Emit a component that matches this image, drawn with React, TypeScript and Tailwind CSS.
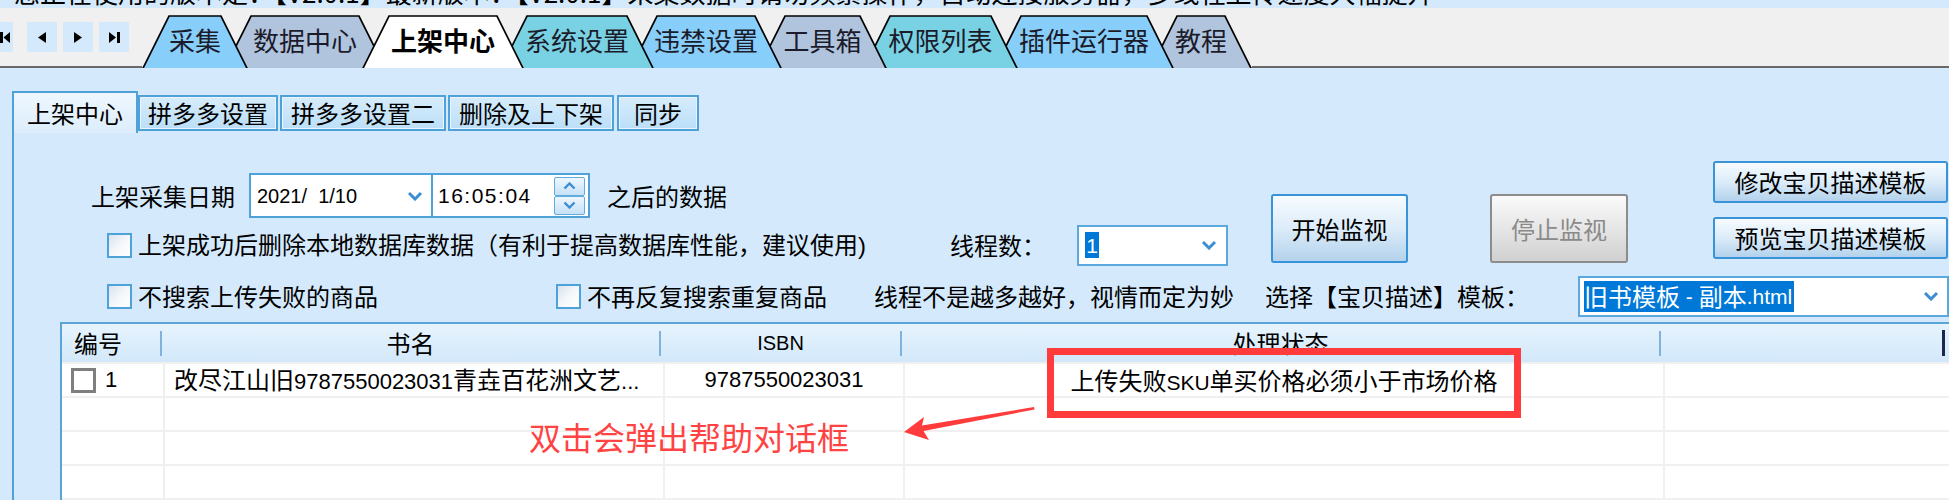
import React from "react";

const CJK = "font-['Noto_Sans_CJK_SC',sans-serif]";
const LAT = "font-['Liberation_Sans','Noto_Sans_CJK_SC',sans-serif]";

type MainTab = { label: string; w: string; n: number; fill: string; z: string; active?: boolean };

const mainTabs: MainTab[] = [
  { label: "采集", w: "w-[106px]", n: 106, fill: "#87cefa", z: "z-[9]" },
  { label: "数据中心", w: "w-[162px]", n: 162, fill: "#b0c4de", z: "z-[8]" },
  { label: "上架中心", w: "w-[162px]", n: 162, fill: "#ffffff", z: "z-[20]", active: true },
  { label: "系统设置", w: "w-[154px]", n: 154, fill: "#79d2e3", z: "z-[6]" },
  { label: "违禁设置", w: "w-[152px]", n: 152, fill: "#87cefa", z: "z-[5]" },
  { label: "工具箱", w: "w-[129px]", n: 129, fill: "#b0c4de", z: "z-[4]" },
  { label: "权限列表", w: "w-[155px]", n: 155, fill: "#79d2e3", z: "z-[3]" },
  { label: "插件运行器", w: "w-[180px]", n: 180, fill: "#87cefa", z: "z-[2]" },
  { label: "教程", w: "w-[102px]", n: 102, fill: "#b0c4de", z: "z-[1]" },
];

function Chev({ up = false, down = false, color = "#3b8ed3" }: { up?: boolean; down?: boolean; color?: string }) {
  if (up) {
    return (
      <svg width="13" height="8" viewBox="0 0 13 8">
        <polyline points="1.5,6.5 6.5,1.5 11.5,6.5" fill="none" stroke={color} strokeWidth="2.4" />
      </svg>
    );
  }
  if (down) {
    return (
      <svg width="13" height="8" viewBox="0 0 13 8">
        <polyline points="1.5,1.5 6.5,6.5 11.5,1.5" fill="none" stroke={color} strokeWidth="2.4" />
      </svg>
    );
  }
  return (
    <svg width="16" height="10" viewBox="0 0 16 10">
      <polyline points="2,2 8,8 14,2" fill="none" stroke={color} strokeWidth="3" />
    </svg>
  );
}

function Check() {
  return <div className="h-[25px] w-[25px] shrink-0 border-2 border-[#4ea1d9] bg-linear-to-br from-[#d9e3ee] via-[#f4f7fa] to-white" />;
}

function InTab({ label, cls }: { label: string; cls: string }) {
  return (
    <div
      className={
        "mb-[2px] flex h-[36px] items-center justify-center border-2 border-[#4ea1d9] text-[24px] leading-none " + cls
      }
    >
      <div className="flex h-full w-full items-center justify-center border border-[#e9f5fe] bg-linear-to-b from-[#d6ecfc] to-[#bcdff8]">
        {label}
      </div>
    </div>
  );
}

export default function App() {
  return (
    <div className={"relative h-[500px] w-[1949px] overflow-hidden bg-[#d4eafc] text-black " + CJK}>
      {/* clipped status line */}
      <div className="h-[8px] overflow-hidden pl-[14px]">
        <div className="mt-[-21px] whitespace-nowrap text-[26px] leading-[26px]">
          您正在使用的版本是：【V2.0.1】最新版本：【V2.0.1】采集数据时请勿频繁操作，自动连接服务器，多线程上传速度大幅提升
        </div>
      </div>

      {/* main tab bar */}
      <div className="flex h-[60px] items-end bg-[#f0f0f0]">
        <div className="flex h-full w-[142px] shrink-0 items-start border-b-2 border-[#696969] pt-[14px]">
          <div className="ml-[-17px] flex h-[30px] w-[30px] items-center bg-[#d4eafc] pl-[17px]">
            <svg width="10" height="11" viewBox="0 0 10 11">
              <rect x="0" y="0" width="3" height="11" fill="#000" />
              <polygon points="10,0 10,11 3.5,5.5" fill="#000" />
            </svg>
          </div>
          <div className="ml-[14px] flex h-[30px] w-[30px] items-center justify-center bg-[#d4eafc]">
            <svg width="8" height="11" viewBox="0 0 8 11">
              <polygon points="8,0 8,11 0,5.5" fill="#000" />
            </svg>
          </div>
          <div className="ml-[6px] flex h-[30px] w-[30px] items-center justify-center bg-[#d4eafc]">
            <svg width="8" height="11" viewBox="0 0 8 11">
              <polygon points="0,0 0,11 8,5.5" fill="#000" />
            </svg>
          </div>
          <div className="ml-[6px] flex h-[30px] w-[30px] items-center justify-center bg-[#d4eafc]">
            <svg width="11" height="11" viewBox="0 0 11 11">
              <polygon points="0,0 0,11 7,5.5" fill="#000" />
              <rect x="8" y="0" width="3" height="11" fill="#000" />
            </svg>
          </div>
        </div>
        <div className="flex h-[53px] shrink-0">
          {mainTabs.map((t, i) => (
            <div
              key={t.label}
              className={
                "relative flex h-[53px] shrink-0 items-center justify-center pb-[3px] " +
                t.w +
                " " +
                t.z +
                (i === 0 ? "" : " ml-[-24px]")
              }
            >
              <svg className="absolute left-0 top-0" width={t.n} height={53} viewBox={`0 0 ${t.n} 53`}>
                <polygon points={`0,54 27,1 ${t.n - 27},1 ${t.n},54`} fill={t.fill} />
                <polyline
                  points={`0.6,54 27,1 ${t.n - 27},1 ${t.n - 0.6},54`}
                  fill="none"
                  stroke="#000"
                  strokeWidth="1.7"
                />
              </svg>
              <span className={"relative text-[26px] leading-[26px] " + (t.active ? "font-bold" : "text-[#1b1b2b]")}>
                {t.label}
              </span>
            </div>
          ))}
        </div>
        <div className="h-full flex-1 border-b-2 border-[#696969]" />
      </div>

      {/* page control */}
      <div className="pl-[12px] pt-[23px]">
        <div className="flex h-[42px] items-end">
          <div className="flex h-[42px] w-[126px] items-center justify-center border-2 border-b-0 border-[#4ea1d9] bg-linear-to-b from-[#eef7fe] to-[#dcedfb] text-[24px] leading-none">
            上架中心
          </div>
          <InTab label="拼多多设置" cls="w-[140px]" />
          <InTab label="拼多多设置二" cls="ml-[2px] w-[166px]" />
          <InTab label="删除及上下架" cls="ml-[2px] w-[166px]" />
          <InTab label="同步" cls="ml-[3px] w-[82px]" />
        </div>

        <div className="h-[367px] border-l-2 border-[#4ea1d9]">
          {/* section 1 */}
          <div className="flex h-[137px] items-start">
            <div className="w-[1214px] shrink-0">
              {/* row A */}
              <div className="mt-[40px] flex h-[45px] items-center pl-[77px]">
                <span className="text-[24px] leading-none">上架采集日期</span>
                <div className="ml-[14px] flex h-[45px] w-[341px] border-2 border-[#4ea1d9] bg-white">
                  <div className="flex w-[182px] items-center border-r-2 border-[#4ea1d9] pl-[6px] pr-[8px]">
                    <span className={"whitespace-pre text-[20px] leading-none " + LAT}>2021/  1/10</span>
                    <span className="ml-auto flex">
                      <Chev />
                    </span>
                  </div>
                  <div className="flex flex-1 items-center pl-[5px] pr-[3px]">
                    <span className={"text-[21px] leading-none tracking-[1.5px] " + LAT}>16:05:04</span>
                    <div className="ml-auto flex h-[38px] w-[31px] flex-col">
                      <div className="flex h-[19px] items-center justify-center rounded-[2px] border border-[#62abdf] bg-linear-to-b from-[#eef7fe] to-[#c6e1f7]">
                        <Chev up />
                      </div>
                      <div className="flex h-[19px] items-center justify-center rounded-[2px] border border-[#62abdf] bg-linear-to-b from-[#eef7fe] to-[#c6e1f7]">
                        <Chev down />
                      </div>
                    </div>
                  </div>
                </div>
                <span className="ml-[17px] text-[24px] leading-none">之后的数据</span>
              </div>
              {/* row B */}
              <div className="mt-[6px] flex h-[42px] items-center pl-[93px]">
                <Check />
                <span className="ml-[6px] whitespace-nowrap text-[24px] leading-none">
                  上架成功后删除本地数据库数据（有利于提高数据库性能，建议使用<span className={LAT}>)</span>
                </span>
                <span className="ml-[84px] text-[24px] leading-none">线程数：</span>
                <div className="ml-[31px] flex h-[41px] w-[151px] items-center border-2 border-[#5aa8dd] bg-white pl-[6px] pr-[9px]">
                  <span
                    className={
                      "flex h-[26px] w-[14px] items-center justify-center bg-[#0078d7] text-[21px] leading-none text-white " +
                      LAT
                    }
                  >
                    1
                  </span>
                  <span className="ml-auto flex">
                    <Chev />
                  </span>
                </div>
              </div>
            </div>

            <div className="ml-[43px] mt-[61px] flex h-[69px] w-[137px] shrink-0 items-center justify-center rounded-[3px] border-2 border-[#3893d8] bg-linear-to-b from-[#f6fbff] via-[#dcecf9] to-[#b3d2ec] text-[24px] leading-none">
              开始监视
            </div>
            <div className="ml-[82px] mt-[61px] flex h-[69px] w-[138px] shrink-0 items-center justify-center rounded-[3px] border-2 border-[#8c8c8c] bg-linear-to-b from-[#fafafa] via-[#e6e6e6] to-[#d0d0d0] text-[24px] leading-none text-[#8a8a8a]">
              停止监视
            </div>
            <div className="ml-[85px] mt-[28px] flex shrink-0 flex-col gap-[14px]">
              <div className="flex h-[42px] w-[235px] items-center justify-center rounded-[3px] border-2 border-[#3893d8] bg-linear-to-b from-[#f6fbff] via-[#dcecf9] to-[#b3d2ec] text-[24px] leading-none">
                修改宝贝描述模板
              </div>
              <div className="flex h-[42px] w-[235px] items-center justify-center rounded-[3px] border-2 border-[#3893d8] bg-linear-to-b from-[#f6fbff] via-[#dcecf9] to-[#b3d2ec] text-[24px] leading-none">
                预览宝贝描述模板
              </div>
            </div>
          </div>

          {/* section 2 */}
          <div className="flex h-[52px] items-center pl-[93px]">
            <Check />
            <span className="ml-[6px] whitespace-nowrap text-[24px] leading-none">不搜索上传失败的商品</span>
            <div className="ml-[178px]">
              <Check />
            </div>
            <span className="ml-[6px] whitespace-nowrap text-[24px] leading-none">不再反复搜索重复商品</span>
            <span className="ml-[47px] whitespace-nowrap text-[24px] leading-none">线程不是越多越好，视情而定为妙</span>
            <span className="ml-[31px] whitespace-nowrap text-[24px] leading-none">选择【宝贝描述】模板：</span>
            <div className="ml-[49px] flex h-[41px] w-[371px] shrink-0 items-center border-2 border-[#5aa8dd] bg-white pl-[4px] pr-[8px]">
              <span className="flex h-[31px] items-center whitespace-pre bg-[#0078d7] pr-[2px] text-[24px] leading-none text-white">
                旧书模板<span className={"text-[21px] " + LAT}> - </span>副本<span className={"text-[21px] " + LAT}>.html</span>
              </span>
              <span className="ml-auto flex">
                <Chev />
              </span>
            </div>
          </div>

          {/* grid */}
          <div className="ml-[46px] border-l-2 border-t-2 border-[#5aa5d8] bg-white">
            <div className="flex h-[38px] items-center bg-linear-to-b from-[#e7f4fe] to-[#d2e8fa] text-[24px] leading-none">
              <div className="w-[98px] shrink-0 pl-[12px]">编号</div>
              <div className="h-[25px] w-[2px] shrink-0 bg-[#7fb3df]" />
              <div className="w-[497px] shrink-0 text-center">书名</div>
              <div className="h-[25px] w-[2px] shrink-0 bg-[#7fb3df]" />
              <div className={"w-[239px] shrink-0 text-center text-[20px] " + LAT}>ISBN</div>
              <div className="h-[25px] w-[2px] shrink-0 bg-[#7fb3df]" />
              <div className="w-[757px] shrink-0 text-center">处理状态</div>
              <div className="h-[25px] w-[2px] shrink-0 bg-[#7fb3df]" />
              <div className="w-[281px] shrink-0" />
              <div className="h-[26px] w-[3px] shrink-0 bg-[#1c2850]" />
            </div>
            {[0, 1, 2, 3, 4].map((r) => (
              <div key={r} className="flex h-[34px] border-t-2 border-[#f0f0f0]">
                <div className="flex w-[101px] shrink-0 items-center pl-[9px]">
                  {r === 0 && (
                    <>
                      <div className="h-[25px] w-[25px] border-[3px] border-[#7f7f7f] bg-white" />
                      <span className={"ml-[9px] text-[22px] leading-none " + LAT}>1</span>
                    </>
                  )}
                </div>
                <div className="flex w-[500px] shrink-0 items-center border-l-2 border-[#f0f0f0] pl-[9px] text-[24px] leading-none">
                  {r === 0 && (
                    <span className="whitespace-nowrap">
                      改尽江山旧<span className={"text-[22px] " + LAT}>9787550023031</span>青垚百花洲文艺
                      <span className={"text-[22px] " + LAT}>...</span>
                    </span>
                  )}
                </div>
                <div className="flex w-[240px] shrink-0 items-center justify-center border-l-2 border-[#f0f0f0]">
                  {r === 0 && <span className={"text-[22px] leading-none " + LAT}>9787550023031</span>}
                </div>
                <div className="flex w-[760px] shrink-0 items-center justify-center border-l-2 border-[#f0f0f0] text-[24px] leading-none">
                  {r === 0 && (
                    <span className="whitespace-nowrap">
                      上传失败<span className={"text-[21px] " + LAT}>SKU</span>单买价格必须小于市场价格
                    </span>
                  )}
                </div>
                <div className="flex-1 border-l-2 border-[#f0f0f0]" />
              </div>
            ))}
          </div>
        </div>
      </div>

      {/* annotations */}
      <div className="absolute left-[1047px] top-[348px] h-[70px] w-[474px] border-[7px] border-[#ff3b3b]" />
      <div className="absolute left-[529px] top-[420px] whitespace-nowrap text-[32px] leading-[32px] text-[#ff4242]">
        双击会弹出帮助对话框
      </div>
      <svg className="absolute left-[900px] top-[400px]" width="140" height="45" viewBox="0 0 140 45">
        <polygon points="4,32 24,17 22,25.5 134,7 134.5,9.5 23.5,31 29,40" fill="#ff3b3b" />
      </svg>
    </div>
  );
}
